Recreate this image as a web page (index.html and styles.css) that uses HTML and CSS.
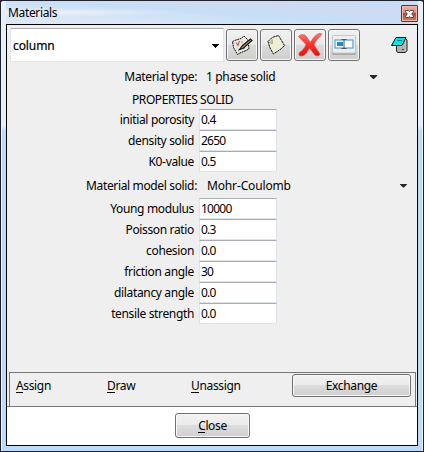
FILE: index.html
```html
<!DOCTYPE html>
<html lang="en">
<head>
<meta charset="utf-8">
<title>Materials</title>
<link rel="stylesheet" href="styles.css">
</head>
<body>
<div class="window">
  <header class="titlebar">
    <span class="title">Materials</span>
    <button class="close-x" aria-label="Close window">
      <svg width="9" height="8" viewBox="0 0 9 8"><path d="M.5.5h3l1 1.200 1-1.200h3v1.300L6.700 4l1.800 2.200v1.300h-3l-1-1.200-1 1.200h-3V6.200L2.300 4 .5 1.800z" fill="#fff" stroke="#4a4657"/></svg>
    </button>
  </header>
  <main class="client">
    <div class="toolbar">
      <div class="combo"><span>column</span><svg width="7" height="4" shape-rendering="crispEdges"><path d="M0 0h7v1H6v1H5v1H4v1H3V3H2V2H1V1H0z"/></svg></div>
      <button class="tool" aria-label="Edit">
        <svg width="22" height="22" viewBox="0 0 22 22"><path d="M1.500 7.500 5 6l5-1.500 3-2.500 4 4 1 9-4 2-5 2-2.500 1.500-4-7z" fill="#e9e7de" stroke="#111" stroke-dasharray="2 .6"/><path d="m5 8.500 2 3 1.500-4.500" fill="none" stroke="#b5605a" stroke-width="1.100"/><path d="m7 16 7-2M10 8h2" stroke="#999" fill="none"/><path d="m8.500 15.500 3-4 8-6.500 1.500 1.500-8.500 7.500z" fill="#a58c70" stroke="#191511" stroke-width="1.100"/></svg>
      </button>
      <button class="tool" aria-label="New">
        <svg width="22" height="22" viewBox="0 0 22 22"><path d="m3 7.500 4-4L13.500 1.500l6 10-3 3-8 5.500-3.500-6z" fill="#eeeed2" stroke="#111" stroke-dasharray="2.500 .6"/><path d="m4 8.500 3.500 1L7 5" fill="#c9c9aa" stroke="#99997d" stroke-width=".8"/></svg>
      </button>
      <button class="tool" aria-label="Delete">
        <svg width="26" height="26" viewBox="0 0 26 26"><defs><linearGradient id="red" x2="0" y2="1"><stop stop-color="#ff7770"/><stop offset=".45" stop-color="#fb332d"/><stop offset="1" stop-color="#e80e0c"/></linearGradient></defs><path d="M1.500 4.500C4 2 8 2 9.500 5l4 5.500C16 6 19.500 1.500 23.500 1.500c1.500 0 1.500 1 .5 2-3.500 3-6 6-7 9.500L23 22c0 2-4 2.500-5.500.5L12.500 16C10.500 19 8.500 24 4 24c-2 0-2.500-2-1.500-3.500 3-2 5.500-4.500 6.500-8z" fill="url(#red)" stroke="#d94943" stroke-width=".7"/></svg>
      </button>
      <button class="tool" aria-label="Rename">
        <svg width="26" height="22" viewBox="0 0 26 22"><rect x="1" y="2" width="24" height="19" rx="1.500" fill="#a9a9a9"/><rect x="1.500" y="1.500" width="23" height="17.500" rx="1" fill="#efefef" stroke="#c5c5c5"/><rect x="4" y="6" width="18" height="8" fill="#fff" stroke="#5aaada" stroke-width="1.300"/><path d="M6 8h6v4H6z" fill="#2589c1"/><path d="M13 5.500v9M10.500 5.500h5M10.500 14.500h5" stroke="#555" fill="none"/></svg>
      </button>
      <svg class="book" width="17" height="17" viewBox="0 0 17 17"><path d="M8.500 1.500h6l1.500 1.500v10.500l-1.500 2h-8L5.500 14V7z" fill="#b0b2ae" stroke="#222"/><path d="M14.500 3v11" fill="none" stroke="#c4c4c2"/><path d="M5 .5h10L11 8.500H.5L3 4z" fill="#00e5e5" stroke="#071414"/><path d="M6.500 3.500H11" stroke="#087b7b"/><path d="M11 12.500h2" stroke="#444"/></svg>
    </div>

    <div class="choice type"><span class="label">Material type:</span><span class="value">1 phase solid</span><i class="arrow"></i></div>
    <div class="heading">PROPERTIES SOLID</div>
    <div class="fields">
      <label>initial porosity</label><input value="0.4">
      <label>density solid</label><input value="2650">
      <label>K0-value</label><input value="0.5">
    </div>
    <div class="choice model"><span class="label">Material model solid:</span><span class="value">Mohr-Coulomb</span><i class="arrow"></i></div>
    <div class="fields">
      <label>Young modulus</label><input value="10000">
      <label>Poisson ratio</label><input value="0.3">
      <label>cohesion</label><input value="0.0">
      <label>friction angle</label><input value="30">
      <label>dilatancy angle</label><input value="0.0">
      <label>tensile strength</label><input value="0.0">
    </div>
    <div class="actions">
      <span><u>A</u>ssign</span><span><u>D</u>raw</span><span><u>U</u>nassign</span>
      <button class="push exchange">Exchange</button>
    </div>
    <footer><button class="push close"><span><u>C</u>lose</span></button></footer>
  </main>
</div>
</body>
</html>
```
FILE: styles.css
```css
* { box-sizing: border-box; }
body { margin: 0; width: 424px; height: 452px; overflow: hidden; font: 12px/16px "Noto Sans", sans-serif; letter-spacing: -.35px; color: #000; background: #252632; }
button, input { font: inherit; letter-spacing: inherit; color: inherit; margin: 0; }
u { text-decoration: none; border-bottom: 1px solid #000; display: inline-block; line-height: 13px; }
.window { width: 424px; height: 452px; border: 1px solid #20212c; border-radius: 3px 3px 0 0; padding: 0 5px 5px; background: linear-gradient(#e4effb 125px, #bddbf8 130px); box-shadow: inset 0 1px #f5f9ff, inset 1px 0 #e9f5ff, inset -1px 0 #e9f5ff; }
.titlebar { height: 23px; display: flex; justify-content: space-between; padding: 3px 0 0 2px; background: radial-gradient(ellipse at 8% 50%, #f1f1fa, transparent 28%), linear-gradient(4deg, #dce8f7 15%, #c6dff6 50%, #cfdbf2 75%, #c2def8); }
.title { line-height: 18px; }
.close-x { width: 17px; height: 17px; margin-top: 1px; padding: 0; border: 1px solid #672d30; border-radius: 1px; display: grid; place-items: center; background: linear-gradient(#efb4a2, #d88676 48%, #bd4935 50%, #d8795c); box-shadow: inset 0 0 0 1px #f3b5a5; }
.client { width: 412px; height: 422px; border: 1px solid #000; background: #efefef; display: flex; flex-direction: column; }
.toolbar { display: flex; align-items: flex-start; gap: 2px; padding: 4px 0 0 3px; height: 37px; }
.combo { width: 214px; height: 34px; margin-top: -1px; background: #fff; border: 1px solid #e3e5e9; border-top-color: #a7abb2; display: flex; align-items: center; justify-content: space-between; padding: 1px 4px 0 2px; letter-spacing: -.1px; -webkit-text-stroke: .2px #000; }
.tool { width: 32px; height: 32px; padding: 0; border: 1px solid #737373; border-radius: 3px; background: linear-gradient(#f1f1f1, #e8e8e8 48%, #dbdbdb 50%, #cfcfcf); box-shadow: inset 0 0 0 1px #f7f7f7; display: grid; place-items: center; }
.book { margin: 8px 0 0 29px; }
.choice { display: flex; align-items: center; height: 16px; }
.choice .label { width: 190px; text-align: right; }
.choice .value { margin-left: 9px; flex: 1; }
.model .value { margin-left: 10px; letter-spacing: -.15px; }
.type { margin-top: 7px; }
.model { height: 15px; margin-top: 6px; margin-bottom: 5px; }
.arrow { width: 7px; height: 4px; background: #262626; clip-path: polygon(0 0, 100% 0, 100% 25%, 57% 100%, 43% 100%, 0 25%); margin-right: 40px; }
.model .arrow { margin-right: 10px; }
.heading { margin: 7px 0 1px 125px; height: 16px; letter-spacing: -.41px; }
.fields { display: grid; grid-template-columns: 187px 78px; grid-auto-rows: 21px; column-gap: 5px; }
.fields label { text-align: right; line-height: 21px; }
.fields input { width: 78px; height: 21px; border: 1px solid #dfe4ea; border-top-color: #a9adb3; outline: 0; padding: 0 1px; background: #fff; letter-spacing: -.75px; }
.actions { margin: auto 1px 0 2px; height: 34px; border: 1px solid #777; border-bottom: 0; display: grid; grid-template-columns: 91px 84px 101px 119px; padding: 1px 0 0 6px; }
.actions > span { padding-top: 4px; }
.push { border: 1px solid #707070; border-radius: 3px; padding: 0; background: linear-gradient(#f2f2f2, #ebebeb 48%, #dddddd 50%, #cfcfcf); box-shadow: inset 0 0 0 1px #f8f8f8; }
.exchange { height: 23px; width: 119px; }
footer { height: 39px; border-top: 1px solid #777; background: #fff; padding-top: 6px; }
.close { display: block; width: 75px; height: 25px; margin-left: 168px; }
```
